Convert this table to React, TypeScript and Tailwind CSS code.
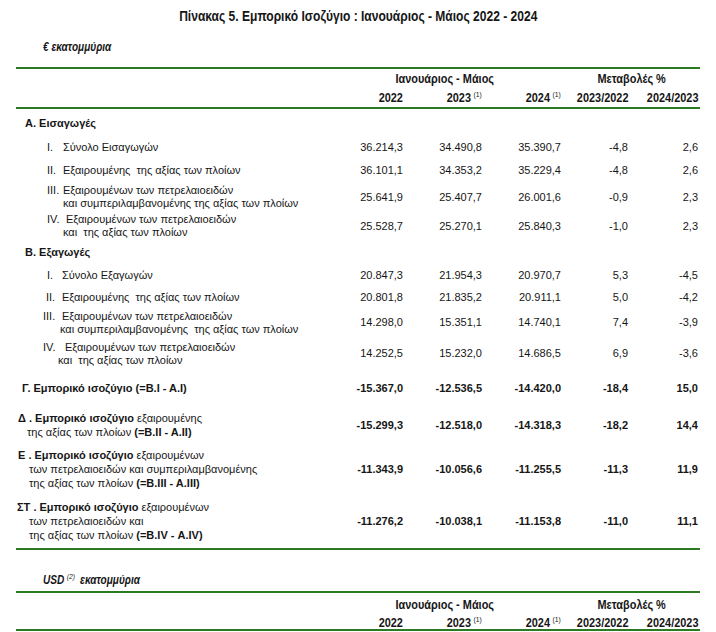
import React from "react";

const cols = "grid grid-cols-[334px_53px_79px_79px_67px_70px] pr-[4px]";

type Row = {
  num: string;
  numCls: string;
  numW: string;
  l1: string;
  l2?: string;
  l2Cls?: string;
  h: string;
  v: string[];
};

const imports: Row[] = [
  { num: "I.", numCls: "pl-[31px]", numW: "w-[16px]", l1: "Σύνολο Εισαγωγών", h: "h-[21px]", v: ["36.214,3", "34.490,8", "35.390,7", "-4,8", "2,6"] },
  { num: "II.", numCls: "pl-[31px]", numW: "w-[16px]", l1: "Εξαιρουμένης  της αξίας των πλοίων", h: "h-[24px]", v: ["36.101,1", "34.353,2", "35.229,4", "-4,8", "2,6"] },
  { num: "III.", numCls: "pl-[31px]", numW: "w-[16px]", l1: "Εξαιρουμένων των πετρελαιοειδών", l2: "και συμπεριλαμβανομένης της αξίας των πλοίων", l2Cls: "pl-[47px]", h: "h-[30px]", v: ["25.641,9", "25.407,7", "26.001,6", "-0,9", "2,3"] },
  { num: "IV.", numCls: "pl-[31px]", numW: "w-[19px]", l1: "Εξαιρουμένων των πετρελαιοειδών", l2: "και  της αξίας των πλοίων", l2Cls: "pl-[47px]", h: "h-[28px]", v: ["25.528,7", "25.270,1", "25.840,3", "-1,0", "2,3"] },
];

const exports: Row[] = [
  { num: "I.", numCls: "pl-[31px]", numW: "w-[15px]", l1: "Σύνολο Εξαγωγών", h: "h-[22px]", v: ["20.847,3", "21.954,3", "20.970,7", "5,3", "-4,5"] },
  { num: "II.", numCls: "pl-[30px]", numW: "w-[16px]", l1: "Εξαιρουμένης  της αξίας των πλοίων", h: "h-[22px]", v: ["20.801,8", "21.835,2", "20.911,1", "5,0", "-4,2"] },
  { num: "III.", numCls: "pl-[27px]", numW: "w-[19px]", l1: "Εξαιρουμένων των πετρελαιοειδών", l2: "και συμπεριλαμβανομένης  της αξίας των πλοίων", l2Cls: "pl-[44px]", h: "h-[29px]", v: ["14.298,0", "15.351,1", "14.740,1", "7,4", "-3,9"] },
  { num: "IV.", numCls: "pl-[27px]", numW: "w-[22px]", l1: "Εξαιρουμένων των πετρελαιοειδών", l2: "και  της αξίας των πλοίων", l2Cls: "pl-[42px]", h: "h-[33px]", v: ["14.252,5", "15.232,0", "14.686,5", "6,9", "-3,6"] },
];

// no narrow face installed, so squeeze the bold heading text the way Arial Narrow looks
function Narrow({ children, o, s = "scale-x-[0.84]" }: { children: React.ReactNode; o: string; s?: string }) {
  return <span className={`inline-block whitespace-nowrap ${s} ${o}`}>{children}</span>;
}

function Sup({ t, cls = "" }: { t: string; cls?: string }) {
  return <span className={`relative -top-[5px] ml-[3px] text-[8px] font-normal ${cls}`}>{t}</span>;
}

function Head({ r1, r2 }: { r1: string; r2: string }) {
  return (
    <div className="font-bold text-[13px]">
      <div className="h-[2px] bg-[#2b7a22]" />
      <div className={`${cols} ${r1} items-center leading-none`}>
        <div />
        <div className="col-span-3 text-center pr-[21px]">
          <Narrow o="origin-center">Ιανουάριος - Μάιος</Narrow>
        </div>
        <div className="col-span-2 text-center pl-[5px]">
          <Narrow o="origin-center">Μεταβολές %</Narrow>
        </div>
      </div>
      <div className={`${cols} ${r2} items-center leading-none text-right`}>
        <div />
        <div>
          <Narrow o="origin-right">2022</Narrow>
        </div>
        <div>
          <Narrow o="origin-right">
            2023<Sup t="(1)" />
          </Narrow>
        </div>
        <div>
          <Narrow o="origin-right">
            2024<Sup t="(1)" />
          </Narrow>
        </div>
        <div>
          <Narrow o="origin-right">2023/2022</Narrow>
        </div>
        <div>
          <Narrow o="origin-right">2024/2023</Narrow>
        </div>
      </div>
      <div className="h-[2px] bg-[#2b7a22]" />
    </div>
  );
}

function Values({ v, bold }: { v: string[]; bold?: boolean }) {
  return (
    <>
      {v.map((x, i) => (
        <div key={i} className={`text-right ${bold ? "font-bold" : ""}`}>
          {x}
        </div>
      ))}
    </>
  );
}

function ItemRow({ r }: { r: Row }) {
  return (
    <div className={`${cols} ${r.h} items-center`}>
      <div className="leading-[13px] whitespace-pre">
        <div className={`flex ${r.numCls}`}>
          <span className={r.numW}>{r.num}</span>
          <span>{r.l1}</span>
        </div>
        {r.l2 && <div className={r.l2Cls}>{r.l2}</div>}
      </div>
      <Values v={r.v} />
    </div>
  );
}

function Section({ title, h, rows }: { title: string; h: string; rows: Row[] }) {
  return (
    <>
      <div className={`${cols} ${h} items-center`}>
        <div className="pl-[9px] font-bold">{title}</div>
      </div>
      {rows.map((r, i) => (
        <ItemRow key={i} r={r} />
      ))}
    </>
  );
}

export default function App() {
  return (
    <div className="w-[716px] h-[632px] overflow-hidden bg-white text-[#161616] text-[11px] font-['Liberation_Sans',Arial,sans-serif]">
      <div className="h-[32px] flex items-center justify-center font-bold text-[14px]">
        <Narrow o="origin-center" s="scale-x-[0.86]">
          Πίνακας 5. Εμπορικό Ισοζύγιο : Ιανουάριος - Μάιος 2022 - 2024
        </Narrow>
      </div>
      <div className="h-[30px] flex items-center pl-[43px] italic font-bold text-[12px]">
        <Narrow o="origin-left">€ εκατομμύρια</Narrow>
      </div>

      <div className="mx-[16px] mt-[5px]">
        <Head r1="h-[19px]" r2="h-[19px]" />

        <Section title="Α. Εισαγωγές" h="h-[28px]" rows={imports} />
        <Section title="Β. Εξαγωγές" h="h-[24px]" rows={exports} />

        <div className={`${cols} h-[36px] items-center`}>
          <div className="pl-[6px] font-bold">Γ. Εμπορικό ισοζύγιο (=Β.Ι - Α.Ι)</div>
          <Values v={["-15.367,0", "-12.536,5", "-14.420,0", "-18,4", "15,0"]} bold />
        </div>

        <div className={`${cols} h-[38px] items-center`}>
          <div className="leading-[14px]">
            <div className="pl-[2px]">
              <b>Δ . Εμπορικό ισοζύγιο</b> εξαιρουμένης
            </div>
            <div className="pl-[11px]">
              της αξίας των πλοίων <b>(=Β.ΙΙ - Α.ΙΙ)</b>
            </div>
          </div>
          <Values v={["-15.299,3", "-12.518,0", "-14.318,3", "-18,2", "14,4"]} bold />
        </div>

        <div className={`${cols} h-[50px] items-center`}>
          <div className="leading-[14px]">
            <div className="pl-[2px]">
              <b>Ε . Εμπορικό ισοζύγιο</b> εξαιρουμένων
            </div>
            <div className="pl-[13px]">των πετρελαιοειδών και συμπεριλαμβανομένης</div>
            <div className="pl-[13px]">
              της αξίας των πλοίων <b>(=Β.ΙΙΙ - Α.ΙΙΙ)</b>
            </div>
          </div>
          <Values v={["-11.343,9", "-10.056,6", "-11.255,5", "-11,3", "11,9"]} bold />
        </div>

        <div className={`${cols} h-[54px] items-center`}>
          <div className="leading-[14px]">
            <div className="pl-[1px]">
              <b>ΣΤ . Εμπορικό ισοζύγιο</b> εξαιρουμένων
            </div>
            <div className="pl-[13px]">των πετρελαιοειδών και</div>
            <div className="pl-[13px]">
              της αξίας των πλοίων <b>(=Β.IV - Α.IV)</b>
            </div>
          </div>
          <Values v={["-11.276,2", "-10.038,1", "-11.153,8", "-11,0", "11,1"]} bold />
        </div>

        <div className="h-[2px] bg-[#2b7a22]" />
      </div>

      <div className="h-[41px] pt-[19px] flex items-center pl-[43px] italic font-bold text-[12px]">
        <Narrow o="origin-left">
          USD<Sup t="(2)" cls="font-bold mr-[6px]" />εκατομμύρια
        </Narrow>
      </div>

      <div className="mx-[16px]">
        <Head r1="h-[22px]" r2="h-[14px]" />
      </div>
    </div>
  );
}
